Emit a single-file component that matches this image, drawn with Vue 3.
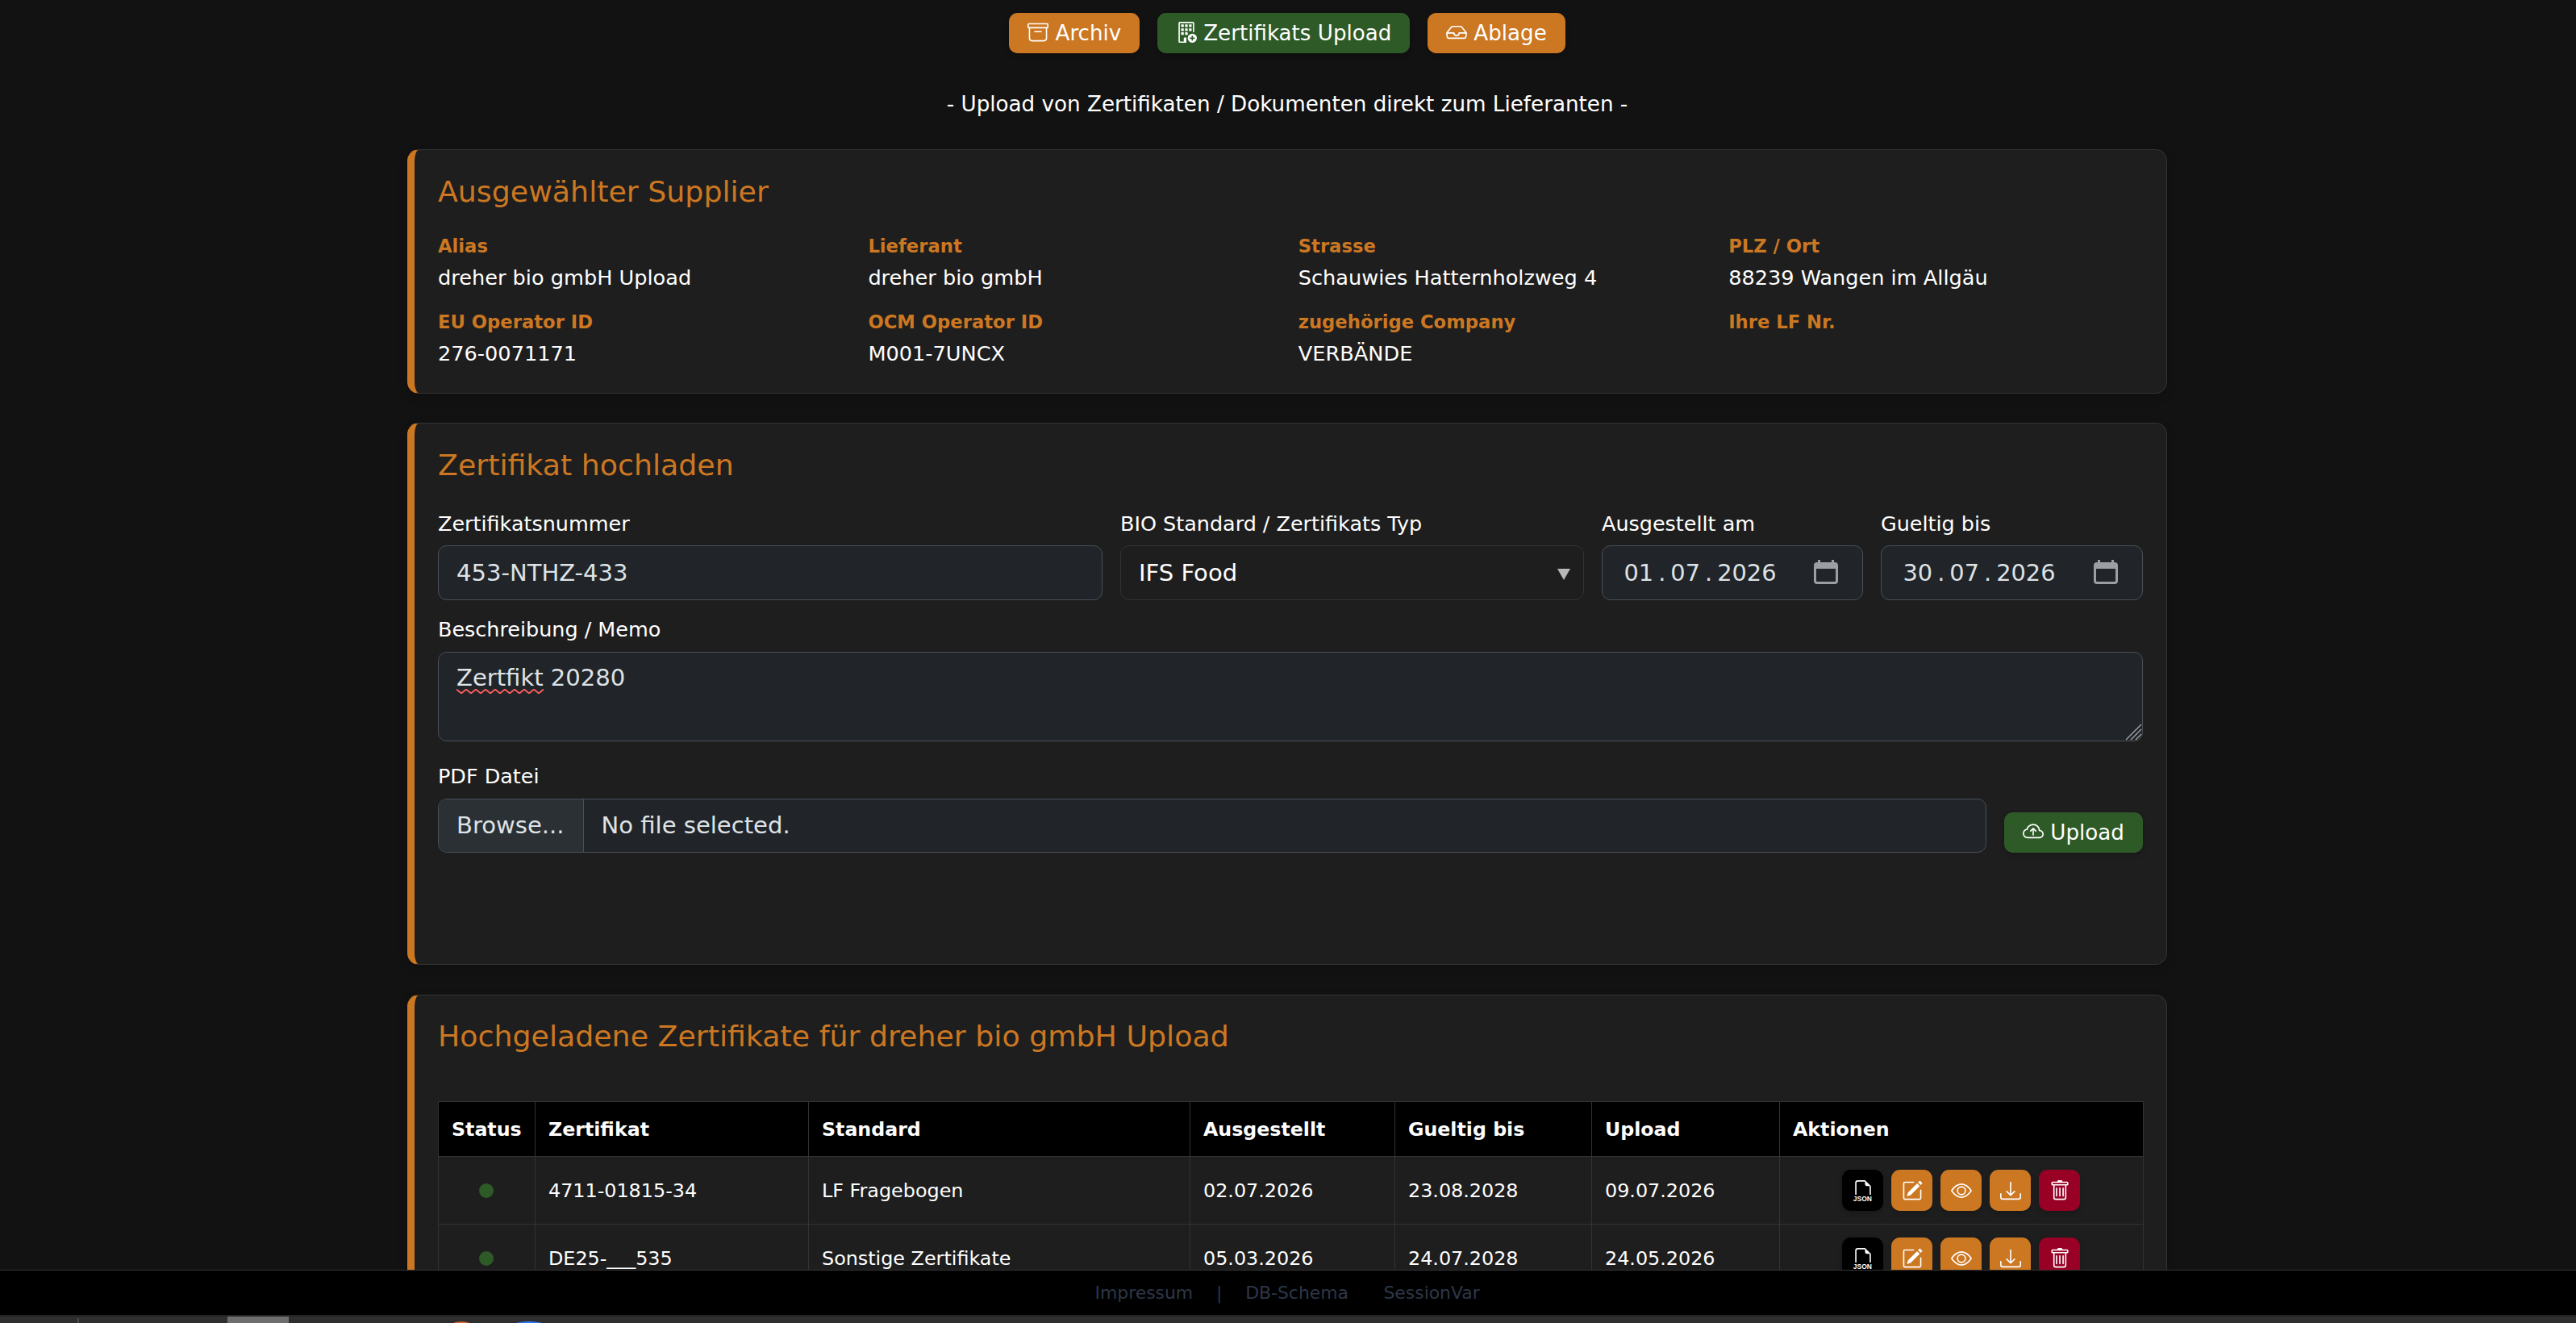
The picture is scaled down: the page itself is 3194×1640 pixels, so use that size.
<script setup>
const icons = {
  archive: ['M0 2a1 1 0 0 1 1-1h14a1 1 0 0 1 1 1v2a1 1 0 0 1-1 1v7.5a2.5 2.5 0 0 1-2.5 2.5h-9A2.5 2.5 0 0 1 1 12.5V5a1 1 0 0 1-1-1zm2 3v7.5A1.5 1.5 0 0 0 3.5 14h9a1.5 1.5 0 0 0 1.5-1.5V5zm13-3H1v2h14zM5 7.5a.5.5 0 0 1 .5-.5h5a.5.5 0 0 1 0 1h-5a.5.5 0 0 1-.5-.5'],
  buildingAdd: [
    'M12.5 16a3.5 3.5 0 1 0 0-7 3.5 3.5 0 0 0 0 7m.5-5v1h1a.5.5 0 0 1 0 1h-1v1a.5.5 0 1 1-1 0v-1h-1a.5.5 0 1 1 0-1h1v-1a.5.5 0 0 1 1 0',
    'M2 1a1 1 0 0 1 1-1h10a1 1 0 0 1 1 1v6.5a.5.5 0 0 1-1 0V1H3v14h3v-2.5a.5.5 0 0 1 .5-.5H8v4H3a1 1 0 0 1-1-1z',
    'M4 2h2v2H4zM7 2h2v2H7zM10 2h2v2h-2zM4 5h2v2H4zM7 5h2v2H7zM10 5h2v2h-2zM4 8h2v2H4zM7 8h2v2H7z'
  ],
  inbox: ['M4.98 4a.5.5 0 0 0-.39.188L1.54 8H6a.5.5 0 0 1 .5.5 1.5 1.5 0 1 0 3 0A.5.5 0 0 1 10 8h4.46l-3.05-3.812A.5.5 0 0 0 11.02 4zm9.954 5H10.45a2.5 2.5 0 0 1-4.9 0H1.066l.32 2.562a.5.5 0 0 0 .497.438h12.234a.5.5 0 0 0 .496-.438zM3.809 3.563A1.5 1.5 0 0 1 4.981 3h6.038a1.5 1.5 0 0 1 1.172.563l3.7 4.625a.5.5 0 0 1 .105.374l-.39 3.124A1.5 1.5 0 0 1 14.117 13H1.883a1.5 1.5 0 0 1-1.489-1.314l-.39-3.124a.5.5 0 0 1 .106-.374z'],
  cloudUp: [
    'M7.646 5.146a.5.5 0 0 1 .708 0l2 2a.5.5 0 0 1-.708.708L8.5 6.707V10.5a.5.5 0 0 1-1 0V6.707L6.354 7.854a.5.5 0 1 1-.708-.708z',
    'M4.406 3.342A5.53 5.53 0 0 1 8 2c2.69 0 4.923 2 5.166 4.579C14.758 6.804 16 8.137 16 9.773 16 11.569 14.502 13 12.687 13H3.781C1.708 13 0 11.366 0 9.318c0-1.763 1.266-3.223 2.942-3.593.143-.863.698-1.723 1.464-2.383m.653.757c-.757.653-1.153 1.44-1.153 2.056v.448l-.445.049C2.064 6.805 1 7.952 1 9.318 1 10.785 2.23 12 3.781 12h8.906C13.98 12 15 10.988 15 9.773c0-1.216-1.02-2.228-2.313-2.228h-.5v-.5C12.188 4.825 10.328 3 8 3a4.53 4.53 0 0 0-2.941 1.1z'
  ],
  json: ['M14 4.5V11h-1V4.5h-2A1.5 1.5 0 0 1 9.5 3V1H4a1 1 0 0 0-1 1v9H2V2a2 2 0 0 1 2-2h5.5z'],
  pencil: [
    'M15.502 1.94a.5.5 0 0 1 0 .706L14.459 3.69l-2-2L13.502.646a.5.5 0 0 1 .707 0l1.293 1.293zm-1.75 2.456-2-2L4.939 9.21a.5.5 0 0 0-.121.196l-.805 2.414a.25.25 0 0 0 .316.316l2.414-.805a.5.5 0 0 0 .196-.12l6.813-6.814z',
    'M1 13.5A1.5 1.5 0 0 0 2.5 15h11a1.5 1.5 0 0 0 1.5-1.5v-6a.5.5 0 0 0-1 0v6a.5.5 0 0 1-.5.5h-11a.5.5 0 0 1-.5-.5v-11a.5.5 0 0 1 .5-.5H9a.5.5 0 0 0 0-1H2.5A1.5 1.5 0 0 0 1 2.5z'
  ],
  eye: [
    'M16 8s-3-5.5-8-5.5S0 8 0 8s3 5.5 8 5.5S16 8 16 8M1.173 8a13 13 0 0 1 1.66-2.043C4.12 4.668 5.88 3.5 8 3.5s3.879 1.168 5.168 2.457A13 13 0 0 1 14.828 8q-.086.13-.195.288c-.335.48-.83 1.12-1.465 1.755C11.879 11.332 10.119 12.5 8 12.5s-3.879-1.168-5.168-2.457A13 13 0 0 1 1.172 8z',
    'M8 5.5a2.5 2.5 0 1 0 0 5 2.5 2.5 0 0 0 0-5M4.5 8a3.5 3.5 0 1 1 7 0 3.5 3.5 0 0 1-7 0'
  ],
  download: [
    'M.5 9.9a.5.5 0 0 1 .5.5v2.5a1 1 0 0 0 1 1h12a1 1 0 0 0 1-1v-2.5a.5.5 0 0 1 1 0v2.5a2 2 0 0 1-2 2H2a2 2 0 0 1-2-2v-2.5a.5.5 0 0 1 .5-.5',
    'M7.646 11.854a.5.5 0 0 0 .708 0l3-3a.5.5 0 0 0-.708-.708L8.5 10.293V1.5a.5.5 0 0 0-1 0v8.793L5.354 8.146a.5.5 0 1 0-.708.708z'
  ],
  trash: [
    'M5.5 5.5A.5.5 0 0 1 6 6v6a.5.5 0 0 1-1 0V6a.5.5 0 0 1 .5-.5m2.5 0a.5.5 0 0 1 .5.5v6a.5.5 0 0 1-1 0V6a.5.5 0 0 1 .5-.5m3 .5a.5.5 0 0 0-1 0v6a.5.5 0 0 0 1 0z',
    'M14.5 3a1 1 0 0 1-1 1H13v9a2 2 0 0 1-2 2H5a2 2 0 0 1-2-2V4h-.5a1 1 0 0 1-1-1V2a1 1 0 0 1 1-1H6a1 1 0 0 1 1-1h2a1 1 0 0 1 1 1h3.5a1 1 0 0 1 1 1zM4.118 4 4 4.059V13a1 1 0 0 0 1 1h6a1 1 0 0 0 1-1V4.059L11.882 4zM2.5 3h11V2h-11z'
  ]
}

const nav = [
  { label: 'Archiv', icon: 'archive' },
  { label: 'Zertifikats Upload', icon: 'buildingAdd', active: true },
  { label: 'Ablage', icon: 'inbox' }
]

const supplier = [
  ['Alias', 'dreher bio gmbH Upload'],
  ['Lieferant', 'dreher bio gmbH'],
  ['Strasse', 'Schauwies Hatternholzweg 4'],
  ['PLZ / Ort', '88239 Wangen im Allgäu'],
  ['EU Operator ID', '276-0071171'],
  ['OCM Operator ID', 'M001-7UNCX'],
  ['zugehörige Company', 'VERBÄNDE'],
  ['Ihre LF Nr.', '']
]

const dates = [
  { label: 'Ausgestellt am', d: '01', m: '07', y: '2026' },
  { label: 'Gueltig bis', d: '30', m: '07', y: '2026' }
]

const columns = ['Status', 'Zertifikat', 'Standard', 'Ausgestellt', 'Gueltig bis', 'Upload', 'Aktionen']
const rows = [
  ['4711-01815-34', 'LF Fragebogen', '02.07.2026', '23.08.2028', '09.07.2026'],
  ['DE25-___535', 'Sonstige Zertifikate', '05.03.2026', '24.07.2028', '24.05.2026']
]
const actions = [
  { icon: 'json', tone: 'black' },
  { icon: 'pencil', tone: 'orange' },
  { icon: 'eye', tone: 'orange' },
  { icon: 'download', tone: 'orange' },
  { icon: 'trash', tone: 'red' }
]
</script>

<template>
  <div class="page">
    <main class="content">
      <nav class="nav">
        <a v-for="n in nav" :key="n.label" class="btn" :class="n.active ? 'green' : 'orange'">
          <svg class="icon" viewBox="0 0 16 16"><path v-for="p in icons[n.icon]" :key="p" :d="p" /></svg>
          {{ n.label }}
        </a>
      </nav>
      <p class="subtitle">- Upload von Zertifikaten / Dokumenten direkt zum Lieferanten -</p>

      <section class="card supplier">
        <h5>Ausgewählter Supplier</h5>
        <div class="facts">
          <div v-for="f in supplier" :key="f[0]">
            <div class="fact-label">{{ f[0] }}</div>
            <div class="fact-value">{{ f[1] }}</div>
          </div>
        </div>
      </section>

      <section class="card form">
        <h5>Zertifikat hochladen</h5>
        <div class="row four">
          <div>
            <label>Zertifikatsnummer</label>
            <div class="control">453-NTHZ-433</div>
          </div>
          <div>
            <label>BIO Standard / Zertifikats Typ</label>
            <div class="control select">
              <span>IFS Food</span>
              <svg class="caret" viewBox="0 0 16 14"><path d="M0 0h16L8 14z" /></svg>
            </div>
          </div>
          <div v-for="t in dates" :key="t.label">
            <label>{{ t.label }}</label>
            <div class="control date">
              <div class="date-parts">
                <span>{{ t.d }}</span><span class="dot">.</span><span>{{ t.m }}</span><span class="dot">.</span><span>{{ t.y }}</span>
              </div>
              <svg class="calendar" viewBox="0 0 30 30">
                <path fill-rule="evenodd" d="M5 0h3v3h14V0h3v3h1a4 4 0 0 1 4 4v19a4 4 0 0 1-4 4H4a4 4 0 0 1-4-4V7a4 4 0 0 1 4-4h1zM3 11v15a1 1 0 0 0 1 1h22a1 1 0 0 0 1-1V11z" />
              </svg>
            </div>
          </div>
        </div>
        <div class="memo-block">
          <label>Beschreibung / Memo</label>
          <div class="control memo">
            <span class="misspelled">Zertfikt<svg class="wave" viewBox="0 0 108 6"><path d="M0 .5L6 5.5L12 .5L18 5.5L24 .5L30 5.5L36 .5L42 5.5L48 .5L54 5.5L60 .5L66 5.5L72 .5L78 5.5L84 .5L90 5.5L96 .5L102 5.5L108 .5" /></svg></span> 20280
            <svg class="grip" viewBox="0 0 21 21"><path d="M1 20L20 1M7 20L20 7M13 20L20 13" /></svg>
          </div>
        </div>
        <div class="row file-row">
          <div class="file-col">
            <label>PDF Datei</label>
            <div class="control file">
              <span class="browse">Browse...</span>
              <span class="chosen">No file selected.</span>
            </div>
          </div>
          <a class="btn green upload">
            <svg class="icon" viewBox="0 0 16 16"><path v-for="p in icons.cloudUp" :key="p" :d="p" /></svg>
            Upload
          </a>
        </div>
      </section>

      <section class="card list">
        <h5>Hochgeladene Zertifikate für dreher bio gmbH Upload</h5>
        <table>
          <colgroup>
            <col class="c1"><col class="c2"><col class="c3"><col class="c4"><col class="c5"><col class="c6"><col class="c7">
          </colgroup>
          <thead>
            <tr><th v-for="c in columns" :key="c">{{ c }}</th></tr>
          </thead>
          <tbody>
            <tr v-for="r in rows" :key="r[0]">
              <td><div class="status"></div></td>
              <td v-for="v in r" :key="v">{{ v }}</td>
              <td>
                <div class="actions">
                  <a v-for="a in actions" :key="a.icon" class="action" :class="a.tone">
                    <svg class="icon" viewBox="0 0 16 16">
                      <path v-for="p in icons[a.icon]" :key="p" :d="p" />
                      <text v-if="a.icon === 'json'" x="7.6" y="15.8" text-anchor="middle" class="json-text">JSON</text>
                    </svg>
                  </a>
                </div>
              </td>
            </tr>
          </tbody>
        </table>
      </section>
    </main>

    <footer class="footer">
      <span>Impressum</span><span class="bar">|</span><span>DB-Schema</span><span class="last">SessionVar</span>
    </footer>
    <div class="taskbar">
      <svg width="3194" height="10" viewBox="0 0 3194 10">
        <path fill="#232323" d="M0 0h3194v2H0z" />
        <path fill="#4c4c4c" d="M96 4h2v6h-2z" />
        <path fill="#6e6e6e" d="M282 2h76v8h-76z" />
        <ellipse cx="572" cy="22" rx="20" ry="13.8" fill="#e0643a" />
        <ellipse cx="656" cy="28" rx="34" ry="20.3" fill="#2f74ee" />
      </svg>
    </div>
  </div>
</template>

<style>
body {
  margin: 0;
  background: #121212;
}
</style>

<style scoped>
* {
  box-sizing: border-box;
}
.page {
  width: 3194px;
  height: 1640px;
  display: flex;
  flex-direction: column;
  overflow: hidden;
  background: #121212;
  color: #fff;
  font-family: "DejaVu Sans", sans-serif;
  font-size: 28.8px;
  line-height: 1.5;
}
.content {
  flex: 1;
  min-height: 0;
  overflow: hidden;
  padding: 16px 507px 0 505px;
}
.nav {
  display: flex;
  justify-content: center;
  gap: 21.6px;
  height: 50px;
}
.btn {
  display: block;
  height: 50px;
  padding: 5.6px 23px;
  border-radius: 10.8px;
  font-size: 26.15px;
  line-height: 38.88px;
  white-space: nowrap;
  box-shadow: 0 3px 6px rgba(0, 0, 0, 0.2);
}
.icon {
  width: 26px;
  height: 26px;
  fill: #fff;
  vertical-align: -3.24px;
}
.orange {
  background: #cc7722;
}
.green {
  background: #2d5a27;
}
.black {
  background: #000;
}
.red {
  background: #990026;
}
.subtitle {
  margin: 44px 0 36px;
  height: 39px;
  font-size: 26.2px;
  line-height: 39px;
  text-align: center;
}
.card {
  border: 1px solid #333;
  border-left: 9px solid #cc7722;
  border-radius: 14.4px;
  background: #1e1e1e;
  padding: 30px 29px 0;
  margin-bottom: 36px;
  box-shadow: 0 4px 12px rgba(0, 0, 0, 0.2);
}
.supplier {
  height: 303px;
}
.form {
  height: 672px;
  margin-bottom: 37px;
}
.list {
  height: 480px;
  padding-top: 29px;
}
h5 {
  margin: 0;
  font-size: 36.32px;
  font-weight: 400;
  line-height: 43px;
  color: #cc7722;
}
.facts {
  display: grid;
  grid-template-columns: repeat(4, 1fr);
  column-gap: 19.5px;
  row-gap: 19px;
  margin-top: 29px;
}
.fact-label {
  font-size: 22.7px;
  font-weight: 700;
  line-height: 35px;
  color: #cc7722;
}
.fact-value {
  margin-top: 2px;
  height: 38px;
  font-size: 25.6px;
  line-height: 38px;
}
label {
  display: block;
  height: 38px;
  margin-bottom: 7px;
  font-size: 25.45px;
  line-height: 37px;
}
.row {
  display: grid;
}
.four {
  grid-template-columns: 824px 575px 324px 325px;
  column-gap: 22px;
  margin-top: 33px;
}
.control {
  height: 68px;
  padding: 11px 21.6px 11px 22px;
  border: 1px solid #495057;
  border-radius: 10.8px;
  background: #212529;
  color: #dee2e6;
  font-size: 29.05px;
  line-height: 44px;
  white-space: nowrap;
}
.select {
  display: flex;
  justify-content: space-between;
  align-items: center;
  padding-right: 16px;
  border-color: #333;
  background: #1e1e1e;
  color: #fff;
}
.caret {
  width: 16px;
  height: 14px;
  margin-top: 3px;
  fill: #b8b8b8;
}
.date {
  display: flex;
  justify-content: space-between;
  align-items: center;
  padding: 0 30px 0 26.5px;
  font-size: 28.8px;
}
.date-parts {
  display: flex;
}
.dot {
  width: 21.2px;
  text-align: center;
}
.calendar {
  width: 30px;
  height: 30px;
  margin-top: -3px;
  fill: #9b9ea2;
}
.memo-block {
  margin-top: 18px;
}
.memo-block label {
  height: 39px;
}
.memo {
  position: relative;
  height: 111px;
  padding-top: 9px;
}
.misspelled {
  position: relative;
}
.wave {
  position: absolute;
  left: 0;
  top: 31px;
  width: 108px;
  height: 6px;
  fill: none;
  stroke: #ff5f5f;
  stroke-width: 1.8;
}
.grip {
  position: absolute;
  right: 0;
  bottom: 0;
  width: 21px;
  height: 21px;
  fill: none;
  stroke: #a5a7a9;
  stroke-width: 1.3;
}
.file-row {
  grid-template-columns: 1920px auto;
  column-gap: 22px;
  align-items: end;
  margin-top: 25px;
}
.file-col label {
  margin-bottom: 8px;
}
.file {
  display: flex;
  height: 67px;
  padding: 0;
  overflow: hidden;
  line-height: 64px;
}
.browse {
  width: 180px;
  padding-left: 22px;
  border-right: 1px solid #495057;
  background: #2b3035;
}
.chosen {
  padding-left: 21.6px;
}
.upload {
  width: 172px;
}
table {
  width: 2114px;
  margin-top: 59px;
  border-collapse: collapse;
  table-layout: fixed;
  font-size: 23.85px;
}
.c1 { width: 120px; }
.c2 { width: 339px; }
.c3 { width: 473px; }
.c4 { width: 254px; }
.c5 { width: 244px; }
.c6 { width: 233px; }
.c7 { width: 451px; }
th,
td {
  height: 84px;
  padding: 0 17px 0 16px;
  border: 1px solid #333;
  text-align: left;
  line-height: 36px;
  white-space: nowrap;
}
th {
  height: 68px;
  background: #000;
  font-size: 23.7px;
}
.status {
  width: 18px;
  height: 18px;
  margin: 0 auto;
  border-radius: 50%;
  background: #2d5a27;
}
.actions {
  display: flex;
  justify-content: center;
  gap: 10px;
}
.action {
  display: flex;
  align-items: center;
  justify-content: center;
  width: 51px;
  height: 51px;
  border-radius: 10.8px;
  box-shadow: 0 3px 6px rgba(0, 0, 0, 0.2);
}
.action .icon {
  overflow: visible;
}
.json-text {
  font-family: "Liberation Sans", Arial, sans-serif;
  font-size: 5.2px;
  font-weight: 700;
}
.footer {
  display: flex;
  flex: none;
  height: 56px;
  padding-left: 1357.5px;
  border-top: 1px solid #333;
  background: #000;
  color: #2d3748;
  font-size: 21.9px;
  line-height: 56px;
}
.bar {
  width: 65px;
  text-align: center;
}
.last {
  margin-left: 43.5px;
}
.taskbar {
  flex: none;
  height: 10px;
  background: #2e2e2e;
  line-height: 0;
}
</style>
